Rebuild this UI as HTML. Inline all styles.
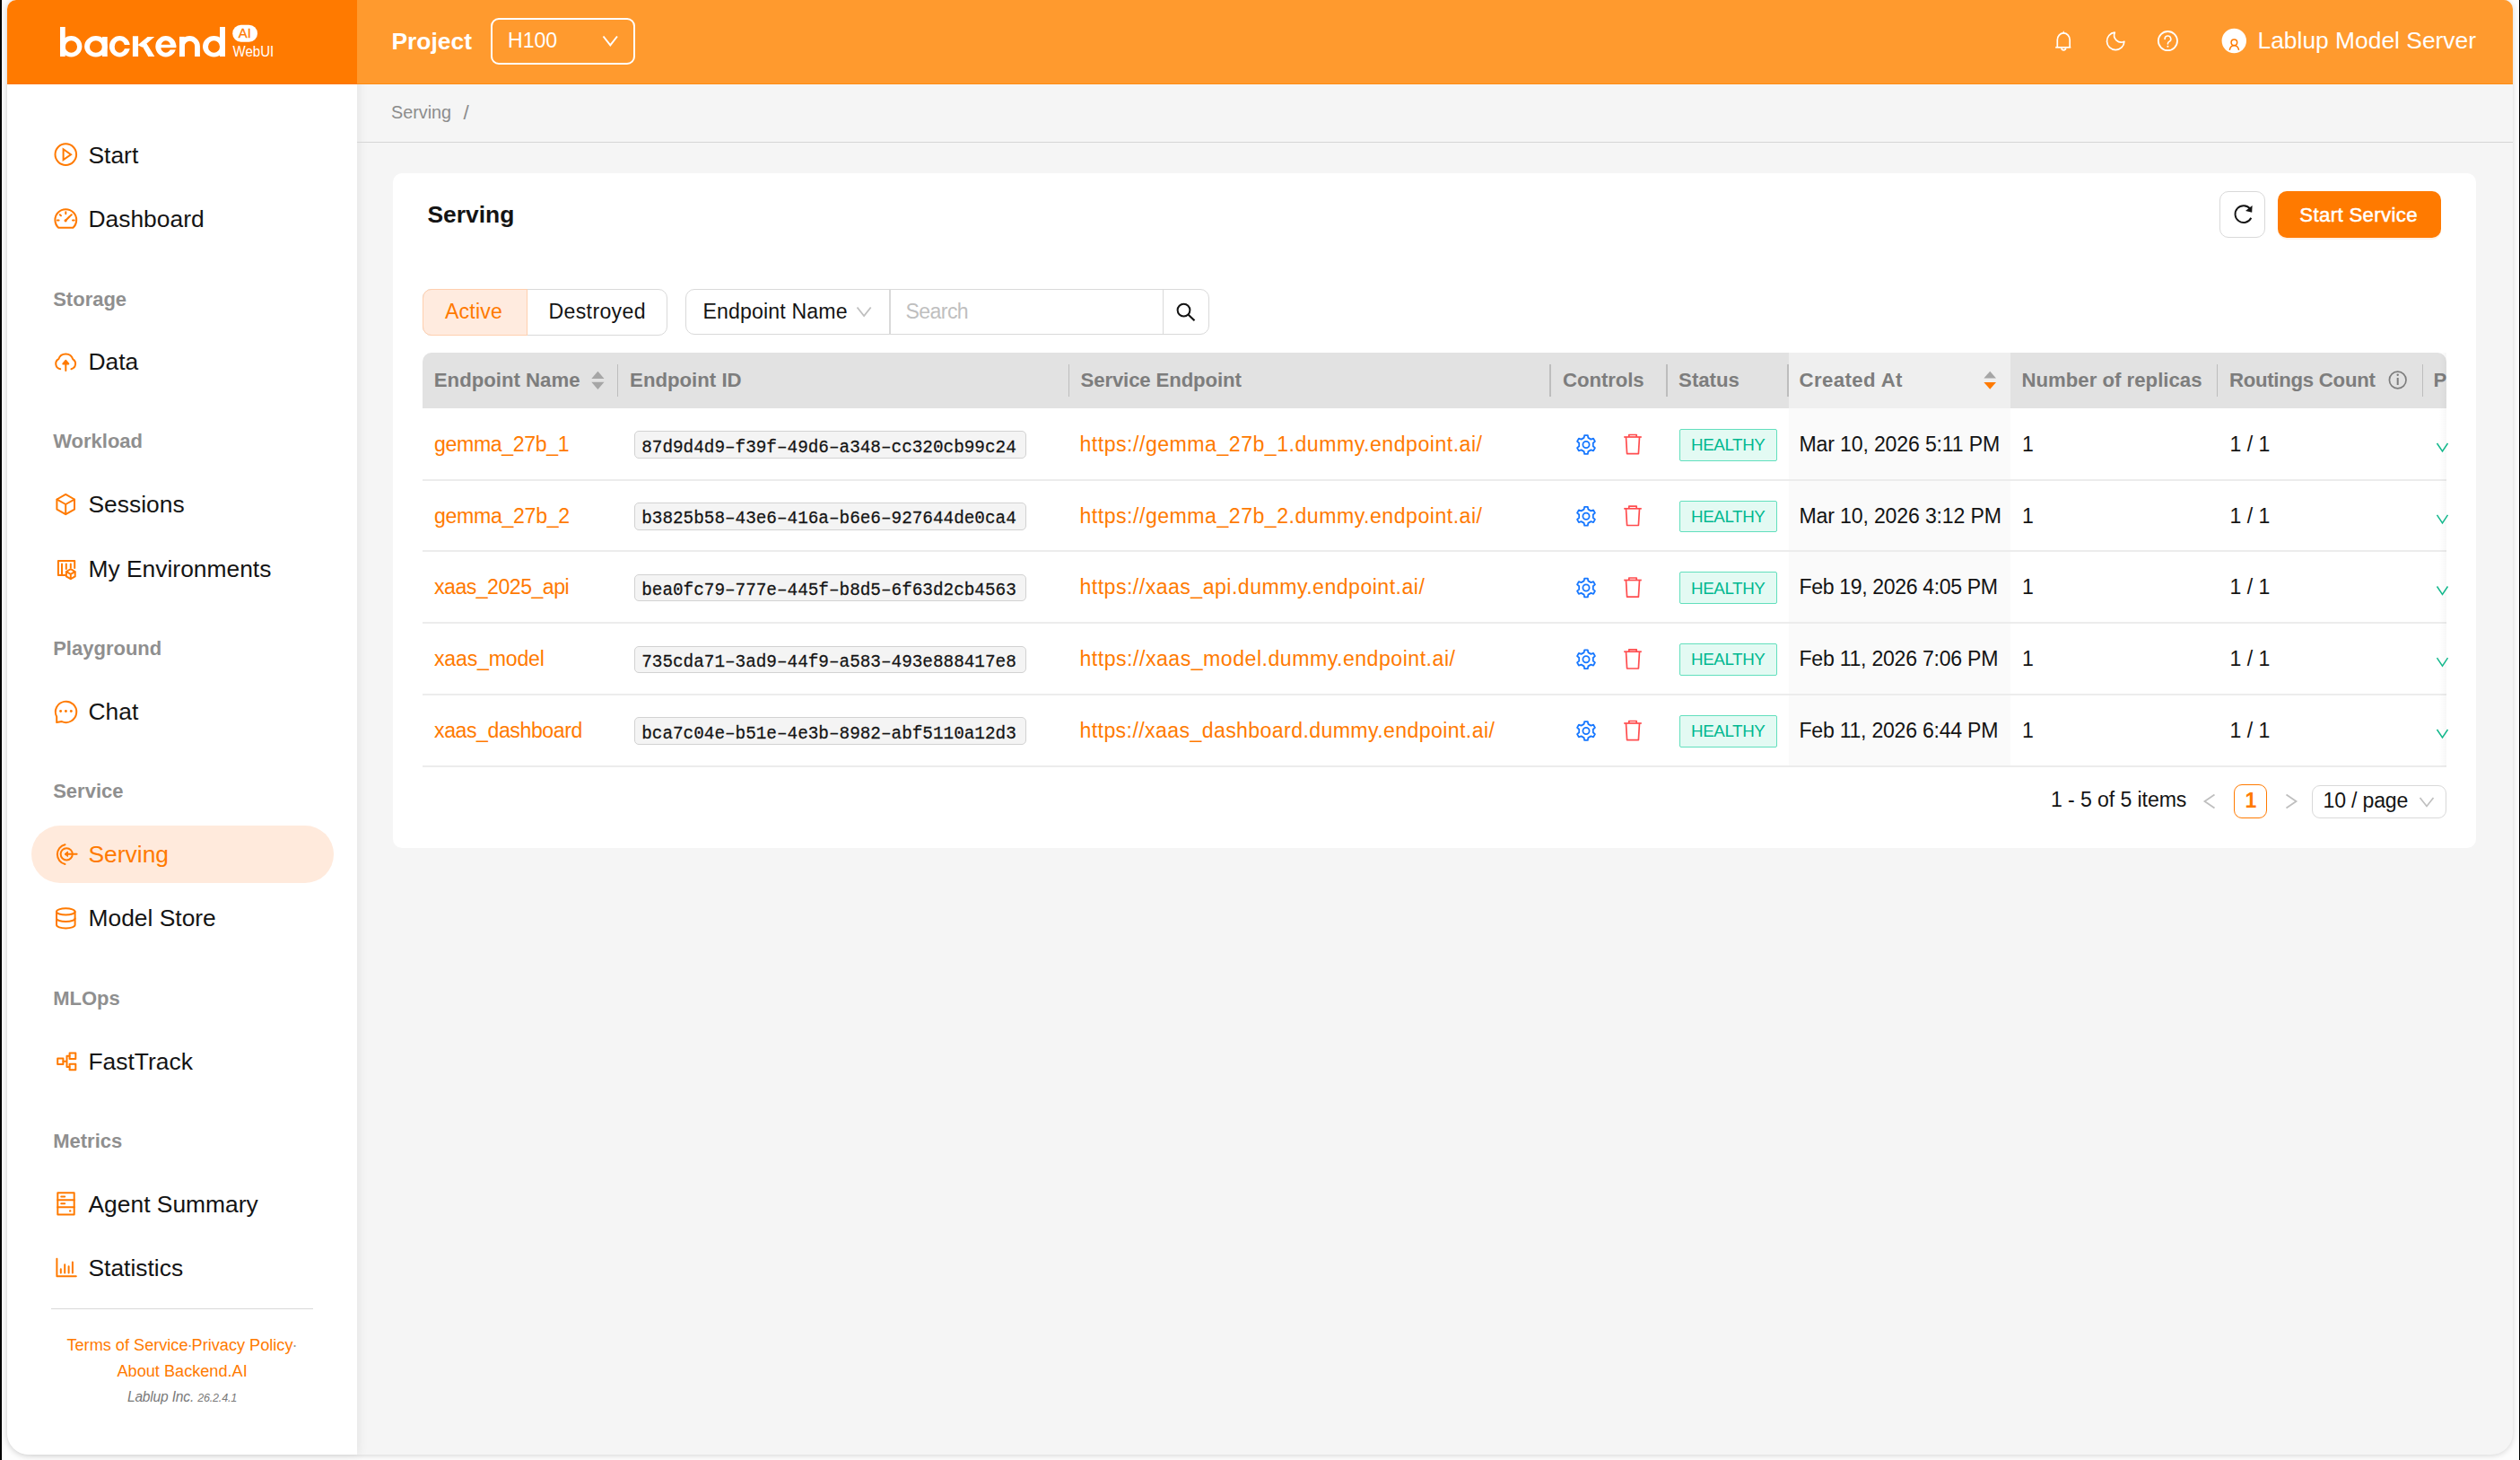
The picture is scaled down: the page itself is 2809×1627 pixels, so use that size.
<!DOCTYPE html>
<html><head><meta charset="utf-8"><title>Serving</title>
<style>
html,body{margin:0;padding:0;}
body{width:2809px;height:1627px;overflow:hidden;position:relative;background:#fdfdfd;font-family:"Liberation Sans",sans-serif;}
.t{position:absolute;white-space:pre;font-family:"Liberation Sans",sans-serif;}
.b{position:absolute;}
.ov{position:absolute;left:0;top:0;}
</style></head><body>
<div class="b" style="left:0px;top:0px;width:2px;height:1627px;background:#000"></div><div class="b" style="left:2808px;top:0px;width:1px;height:1627px;background:#000"></div><div class="b" style="left:8px;top:0px;width:2793px;height:1621px;background:#f5f5f5;border-radius:10px 10px 24px 24px;box-shadow:0 1px 6px rgba(0,0,0,0.16);overflow:hidden"></div><div class="b" style="left:8px;top:0px;width:390px;height:1621px;background:#fff;border-radius:10px 0 0 24px;box-shadow:2px 0 12px rgba(0,0,0,0.07)"></div><div class="b" style="left:8px;top:0px;width:390px;height:94px;background:#FF7A00;border-top-left-radius:10px"></div><div class="b" style="left:398px;top:0px;width:2403px;height:94px;background:#FF9A2E;border-top-right-radius:10px"></div><div class="b" style="left:398px;top:93px;width:2403px;height:1px;background:#FF8C15"></div><div class="b" style="left:8px;top:93px;width:390px;height:1px;background:#FB7500"></div><div class="t " style="left:436.5px;top:33.15px;font-size:26.4px;line-height:26.4px;color:#fff;font-weight:700;">Project</div><div class="b" style="left:547px;top:20px;width:161px;height:52px;border:2px solid #fff;border-radius:9px;box-sizing:border-box"></div><div class="t " style="left:566.0px;top:34.45px;font-size:23.1px;line-height:23.1px;color:#fff;font-weight:400;">H100</div><div class="t " style="left:2516.5px;top:31.65px;font-size:26.4px;line-height:26.4px;color:#fff;font-weight:400;">Lablup Model Server</div><div class="b" style="left:35px;top:919.5px;width:337px;height:64.0px;background:#FFEADC;border-radius:32px"></div><div class="t " style="left:98.5px;top:160.15px;font-size:26.4px;line-height:26.4px;color:#141414;font-weight:400;">Start</div><div class="t " style="left:98.5px;top:231.15px;font-size:26.4px;line-height:26.4px;color:#141414;font-weight:400;">Dashboard</div><div class="t " style="left:59.2px;top:322.68px;font-size:22px;line-height:22px;color:#8f8f8f;font-weight:700;letter-spacing:0px">Storage</div><div class="t " style="left:98.5px;top:389.65px;font-size:26.4px;line-height:26.4px;color:#141414;font-weight:400;">Data</div><div class="t " style="left:59.2px;top:481.38px;font-size:22px;line-height:22px;color:#8f8f8f;font-weight:700;letter-spacing:0px">Workload</div><div class="t " style="left:98.5px;top:548.65px;font-size:26.4px;line-height:26.4px;color:#141414;font-weight:400;">Sessions</div><div class="t " style="left:98.5px;top:620.65px;font-size:26.4px;line-height:26.4px;color:#141414;font-weight:400;">My Environments</div><div class="t " style="left:59.2px;top:712.38px;font-size:22px;line-height:22px;color:#8f8f8f;font-weight:700;letter-spacing:0px">Playground</div><div class="t " style="left:98.5px;top:780.05px;font-size:26.4px;line-height:26.4px;color:#141414;font-weight:400;">Chat</div><div class="t " style="left:59.2px;top:871.18px;font-size:22px;line-height:22px;color:#8f8f8f;font-weight:700;letter-spacing:0px">Service</div><div class="t " style="left:98.5px;top:939.15px;font-size:26.4px;line-height:26.4px;color:#FF7A00;font-weight:400;">Serving</div><div class="t " style="left:98.5px;top:1009.95px;font-size:26.4px;line-height:26.4px;color:#141414;font-weight:400;">Model Store</div><div class="t " style="left:59.2px;top:1101.98px;font-size:22px;line-height:22px;color:#8f8f8f;font-weight:700;letter-spacing:0px">MLOps</div><div class="t " style="left:98.5px;top:1169.65px;font-size:26.4px;line-height:26.4px;color:#141414;font-weight:400;">FastTrack</div><div class="t " style="left:59.2px;top:1261.38px;font-size:22px;line-height:22px;color:#8f8f8f;font-weight:700;letter-spacing:0px">Metrics</div><div class="t " style="left:98.5px;top:1328.55px;font-size:26.4px;line-height:26.4px;color:#141414;font-weight:400;">Agent Summary</div><div class="t " style="left:98.5px;top:1399.65px;font-size:26.4px;line-height:26.4px;color:#141414;font-weight:400;">Statistics</div><div class="b" style="left:57px;top:1457.5px;width:292px;height:1.0px;background:#d9d9d9"></div><div class="t" style="left:8px;width:390px;text-align:center;top:1489.94px;font-size:18.15px;line-height:18.15px;color:#FF7A00">Terms of Service<span style="color:#999;margin:0 -1px">·</span>Privacy Policy<span style="color:#999;margin:0 0 0 -1px">·</span></div><div class="t " style="left:130.5px;top:1518.54px;font-size:18.15px;line-height:18.15px;color:#FF7A00;font-weight:400;">About Backend.AI</div><div class="t" style="left:8px;width:390px;text-align:center;top:1548.93px;font-size:15.6px;line-height:16.5px;color:#7a7a7a;font-style:italic;letter-spacing:-0.2px">Lablup Inc. <span style="font-size:12.6px">26.2.4.1</span></div><div class="t " style="left:436.0px;top:115.74px;font-size:19.8px;line-height:19.8px;color:#8c8c8c;font-weight:400;">Serving</div><div class="t " style="left:516.5px;top:115.15px;font-size:22.5px;line-height:22.5px;color:#8c8c8c;font-weight:400;">/</div><div class="b" style="left:398px;top:158px;width:2403px;height:1px;background:#d6d6d6"></div><div class="b" style="left:438px;top:193px;width:2322px;height:752px;background:#fff;border-radius:10px"></div><div class="t " style="left:476.5px;top:225.95px;font-size:26.4px;line-height:26.4px;color:#141414;font-weight:700;">Serving</div><div class="b" style="left:2474px;top:213px;width:51px;height:51.5px;border:1.65px solid #d9d9d9;border-radius:10px;box-sizing:border-box;background:#fff"></div><div class="b" style="left:2538.5px;top:213px;width:182.5px;height:51.80000000000001px;background:#FF7A00;border-radius:10px;box-shadow:0 2px 0 rgba(255,122,0,0.1)"></div><div class="t " style="left:2563.3px;top:228.51px;font-size:22.2px;line-height:22.2px;color:#fff;font-weight:400;-webkit-text-stroke:0.5px #fff;letter-spacing:0.35px">Start Service</div><div class="b" style="left:471px;top:322px;width:273px;height:51.5px;border:1.65px solid #d9d9d9;border-radius:10px;box-sizing:border-box;background:#fff"></div><div class="b" style="left:471px;top:322px;width:117px;height:51.5px;border:1.65px solid #FFCFAE;border-radius:10px 0 0 10px;box-sizing:border-box;background:#FFEBDF"></div><div class="t " style="left:496.0px;top:336.25px;font-size:23.1px;line-height:23.1px;color:#FF7A00;font-weight:400;letter-spacing:0.2px">Active</div><div class="t " style="left:611.5px;top:336.25px;font-size:23.1px;line-height:23.1px;color:#141414;font-weight:400;letter-spacing:0.35px">Destroyed</div><div class="b" style="left:764px;top:322px;width:583.5px;height:51px;border:1.65px solid #d9d9d9;border-radius:10px;box-sizing:border-box;background:#fff"></div><div class="b" style="left:991px;top:322px;width:1.6000000000000227px;height:51px;background:#d9d9d9"></div><div class="b" style="left:1295.5px;top:322px;width:1.599999999999909px;height:51px;background:#d9d9d9"></div><div class="t " style="left:783.5px;top:336.25px;font-size:23.1px;line-height:23.1px;color:#141414;font-weight:400;letter-spacing:0.16px">Endpoint Name</div><div class="t " style="left:1009.5px;top:336.25px;font-size:23.1px;line-height:23.1px;color:#bfbfbf;font-weight:400;letter-spacing:-0.6px">Search</div><div class="b" style="left:471px;top:393px;width:2256px;height:62px;background:#e2e2e2;border-radius:10px 10px 0 0"></div><div class="b" style="left:1993.5px;top:393px;width:247.5px;height:62px;background:#efefef"></div><div class="b" style="left:1993.5px;top:455px;width:247.5px;height:399px;background:#fafafa"></div><div class="t " style="left:483.8px;top:413.21px;font-size:22.2px;line-height:22.2px;color:#7d7d7d;font-weight:700;letter-spacing:0px">Endpoint Name</div><div class="t " style="left:702.1px;top:413.21px;font-size:22.2px;line-height:22.2px;color:#7d7d7d;font-weight:700;letter-spacing:0px">Endpoint ID</div><div class="t " style="left:1204.5px;top:413.21px;font-size:22.2px;line-height:22.2px;color:#7d7d7d;font-weight:700;letter-spacing:-0.13px">Service Endpoint</div><div class="t " style="left:1742.1px;top:413.21px;font-size:22.2px;line-height:22.2px;color:#7d7d7d;font-weight:700;letter-spacing:-0.09px">Controls</div><div class="t " style="left:1871.1px;top:413.21px;font-size:22.2px;line-height:22.2px;color:#7d7d7d;font-weight:700;letter-spacing:0px">Status</div><div class="t " style="left:2005.5px;top:413.21px;font-size:22.2px;line-height:22.2px;color:#7d7d7d;font-weight:700;letter-spacing:0.4px">Created At</div><div class="t " style="left:2253.5px;top:413.21px;font-size:22.2px;line-height:22.2px;color:#7d7d7d;font-weight:700;letter-spacing:0px">Number of replicas</div><div class="t " style="left:2484.9px;top:413.21px;font-size:22.2px;line-height:22.2px;color:#7d7d7d;font-weight:700;letter-spacing:-0.26px">Routings Count</div><div class="b" style="left:2700px;top:393px;width:27px;height:62px;overflow:hidden;border-top-right-radius:10px"><div class="t" style="left:12.5px;top:20.21px;font-size:22.2px;line-height:22.2px;color:#7d7d7d;font-weight:700">P</div></div><div class="b" style="left:687.8000000000001px;top:406px;width:1.599999999999909px;height:36px;background:#bdbdbd"></div><div class="b" style="left:1190.9px;top:406px;width:1.599999999999909px;height:36px;background:#bdbdbd"></div><div class="b" style="left:1727.2px;top:406px;width:1.599999999999909px;height:36px;background:#bdbdbd"></div><div class="b" style="left:1857.2px;top:406px;width:1.599999999999909px;height:36px;background:#bdbdbd"></div><div class="b" style="left:1992.2px;top:406px;width:1.599999999999909px;height:36px;background:#bdbdbd"></div><div class="b" style="left:2470.7999999999997px;top:406px;width:1.6000000000003638px;height:36px;background:#bdbdbd"></div><div class="b" style="left:2699.8999999999996px;top:406px;width:1.6000000000003638px;height:36px;background:#bdbdbd"></div><div class="b" style="left:471px;top:534px;width:2256px;height:1.5px;background:#ececec"></div><div class="t " style="left:484.0px;top:483.95px;font-size:23.1px;line-height:23.1px;color:#FF7A00;font-weight:400;letter-spacing:-0.34px">gemma_27b_1</div><div class="b" style="left:706.5px;top:480.3px;width:437.0px;height:30.5px;background:#f4f4f4;border:1.65px solid #d2d2d2;border-radius:5px;box-sizing:border-box"></div><div class="t " style="left:715.2px;top:489.74px;font-size:19.33px;line-height:19.33px;color:#141414;font-weight:400;font-family:'Liberation Mono',monospace;transform:scaleY(1.08);transform-origin:0 14.2px;-webkit-text-stroke:0.25px #141414">87d9d4d9–f39f–49d6–a348–cc320cb99c24</div><div class="t " style="left:1203.5px;top:483.95px;font-size:23.1px;line-height:23.1px;color:#FF7A00;font-weight:400;letter-spacing:0.51px">https://gemma_27b_1.dummy.endpoint.ai/</div><div class="b" style="left:1872px;top:477.9px;width:108.5px;height:35.89999999999998px;background:#E3FAF3;border:1.9px solid #62DFBD;border-radius:2px;box-sizing:border-box"></div><div class="t " style="left:1885.0px;top:487.09px;font-size:18.8px;line-height:18.8px;color:#00B890;font-weight:400;letter-spacing:-0.4px">HEALTHY</div><div class="t " style="left:2005.5px;top:483.95px;font-size:23.1px;line-height:23.1px;color:#141414;font-weight:400;letter-spacing:-0.16px">Mar 10, 2026 5:11 PM</div><div class="t " style="left:2254.0px;top:483.95px;font-size:23.1px;line-height:23.1px;color:#141414;font-weight:400;">1</div><div class="t " style="left:2485.5px;top:483.95px;font-size:23.1px;line-height:23.1px;color:#141414;font-weight:400;">1 / 1</div><div class="b" style="left:471px;top:613px;width:2256px;height:1.5px;background:#ececec"></div><div class="t " style="left:484.0px;top:563.70px;font-size:23.1px;line-height:23.1px;color:#FF7A00;font-weight:400;letter-spacing:-0.3px">gemma_27b_2</div><div class="b" style="left:706.5px;top:560.0px;width:437.0px;height:30.5px;background:#f4f4f4;border:1.65px solid #d2d2d2;border-radius:5px;box-sizing:border-box"></div><div class="t " style="left:715.2px;top:569.49px;font-size:19.33px;line-height:19.33px;color:#141414;font-weight:400;font-family:'Liberation Mono',monospace;transform:scaleY(1.08);transform-origin:0 14.2px;-webkit-text-stroke:0.25px #141414">b3825b58–43e6–416a–b6e6–927644de0ca4</div><div class="t " style="left:1203.5px;top:563.70px;font-size:23.1px;line-height:23.1px;color:#FF7A00;font-weight:400;letter-spacing:0.51px">https://gemma_27b_2.dummy.endpoint.ai/</div><div class="b" style="left:1872px;top:557.6px;width:108.5px;height:35.89999999999998px;background:#E3FAF3;border:1.9px solid #62DFBD;border-radius:2px;box-sizing:border-box"></div><div class="t " style="left:1885.0px;top:566.84px;font-size:18.8px;line-height:18.8px;color:#00B890;font-weight:400;letter-spacing:-0.4px">HEALTHY</div><div class="t " style="left:2005.5px;top:563.70px;font-size:23.1px;line-height:23.1px;color:#141414;font-weight:400;letter-spacing:-0.16px">Mar 10, 2026 3:12 PM</div><div class="t " style="left:2254.0px;top:563.70px;font-size:23.1px;line-height:23.1px;color:#141414;font-weight:400;">1</div><div class="t " style="left:2485.5px;top:563.70px;font-size:23.1px;line-height:23.1px;color:#141414;font-weight:400;">1 / 1</div><div class="b" style="left:471px;top:693px;width:2256px;height:1.5px;background:#ececec"></div><div class="t " style="left:484.0px;top:643.45px;font-size:23.1px;line-height:23.1px;color:#FF7A00;font-weight:400;letter-spacing:-0.5px">xaas_2025_api</div><div class="b" style="left:706.5px;top:639.8px;width:437.0px;height:30.5px;background:#f4f4f4;border:1.65px solid #d2d2d2;border-radius:5px;box-sizing:border-box"></div><div class="t " style="left:715.2px;top:649.24px;font-size:19.33px;line-height:19.33px;color:#141414;font-weight:400;font-family:'Liberation Mono',monospace;transform:scaleY(1.08);transform-origin:0 14.2px;-webkit-text-stroke:0.25px #141414">bea0fc79–777e–445f–b8d5–6f63d2cb4563</div><div class="t " style="left:1203.5px;top:643.45px;font-size:23.1px;line-height:23.1px;color:#FF7A00;font-weight:400;letter-spacing:0.48px">https://xaas_api.dummy.endpoint.ai/</div><div class="b" style="left:1872px;top:637.4px;width:108.5px;height:35.89999999999998px;background:#E3FAF3;border:1.9px solid #62DFBD;border-radius:2px;box-sizing:border-box"></div><div class="t " style="left:1885.0px;top:646.59px;font-size:18.8px;line-height:18.8px;color:#00B890;font-weight:400;letter-spacing:-0.4px">HEALTHY</div><div class="t " style="left:2005.5px;top:643.45px;font-size:23.1px;line-height:23.1px;color:#141414;font-weight:400;letter-spacing:-0.37px">Feb 19, 2026 4:05 PM</div><div class="t " style="left:2254.0px;top:643.45px;font-size:23.1px;line-height:23.1px;color:#141414;font-weight:400;">1</div><div class="t " style="left:2485.5px;top:643.45px;font-size:23.1px;line-height:23.1px;color:#141414;font-weight:400;">1 / 1</div><div class="b" style="left:471px;top:773px;width:2256px;height:1.5px;background:#ececec"></div><div class="t " style="left:484.0px;top:723.20px;font-size:23.1px;line-height:23.1px;color:#FF7A00;font-weight:400;letter-spacing:-0.18px">xaas_model</div><div class="b" style="left:706.5px;top:719.5px;width:437.0px;height:30.5px;background:#f4f4f4;border:1.65px solid #d2d2d2;border-radius:5px;box-sizing:border-box"></div><div class="t " style="left:715.2px;top:728.99px;font-size:19.33px;line-height:19.33px;color:#141414;font-weight:400;font-family:'Liberation Mono',monospace;transform:scaleY(1.08);transform-origin:0 14.2px;-webkit-text-stroke:0.25px #141414">735cda71–3ad9–44f9–a583–493e888417e8</div><div class="t " style="left:1203.5px;top:723.20px;font-size:23.1px;line-height:23.1px;color:#FF7A00;font-weight:400;letter-spacing:0.51px">https://xaas_model.dummy.endpoint.ai/</div><div class="b" style="left:1872px;top:717.1px;width:108.5px;height:35.89999999999998px;background:#E3FAF3;border:1.9px solid #62DFBD;border-radius:2px;box-sizing:border-box"></div><div class="t " style="left:1885.0px;top:726.34px;font-size:18.8px;line-height:18.8px;color:#00B890;font-weight:400;letter-spacing:-0.4px">HEALTHY</div><div class="t " style="left:2005.5px;top:723.20px;font-size:23.1px;line-height:23.1px;color:#141414;font-weight:400;letter-spacing:-0.26px">Feb 11, 2026 7:06 PM</div><div class="t " style="left:2254.0px;top:723.20px;font-size:23.1px;line-height:23.1px;color:#141414;font-weight:400;">1</div><div class="t " style="left:2485.5px;top:723.20px;font-size:23.1px;line-height:23.1px;color:#141414;font-weight:400;">1 / 1</div><div class="b" style="left:471px;top:853px;width:2256px;height:1.5px;background:#ececec"></div><div class="t " style="left:484.0px;top:802.95px;font-size:23.1px;line-height:23.1px;color:#FF7A00;font-weight:400;letter-spacing:-0.42px">xaas_dashboard</div><div class="b" style="left:706.5px;top:799.3px;width:437.0px;height:30.5px;background:#f4f4f4;border:1.65px solid #d2d2d2;border-radius:5px;box-sizing:border-box"></div><div class="t " style="left:715.2px;top:808.74px;font-size:19.33px;line-height:19.33px;color:#141414;font-weight:400;font-family:'Liberation Mono',monospace;transform:scaleY(1.08);transform-origin:0 14.2px;-webkit-text-stroke:0.25px #141414">bca7c04e–b51e–4e3b–8982–abf5110a12d3</div><div class="t " style="left:1203.5px;top:802.95px;font-size:23.1px;line-height:23.1px;color:#FF7A00;font-weight:400;letter-spacing:0.4px">https://xaas_dashboard.dummy.endpoint.ai/</div><div class="b" style="left:1872px;top:796.9px;width:108.5px;height:35.89999999999998px;background:#E3FAF3;border:1.9px solid #62DFBD;border-radius:2px;box-sizing:border-box"></div><div class="t " style="left:1885.0px;top:806.09px;font-size:18.8px;line-height:18.8px;color:#00B890;font-weight:400;letter-spacing:-0.4px">HEALTHY</div><div class="t " style="left:2005.5px;top:802.95px;font-size:23.1px;line-height:23.1px;color:#141414;font-weight:400;letter-spacing:-0.26px">Feb 11, 2026 6:44 PM</div><div class="t " style="left:2254.0px;top:802.95px;font-size:23.1px;line-height:23.1px;color:#141414;font-weight:400;">1</div><div class="t " style="left:2485.5px;top:802.95px;font-size:23.1px;line-height:23.1px;color:#141414;font-weight:400;">1 / 1</div><div class="b" style="left:2719px;top:393px;width:8px;height:461px;background:linear-gradient(to right, rgba(0,0,0,0), rgba(0,0,0,0.03))"></div><div class="t " style="left:2286.0px;top:880.45px;font-size:23.1px;line-height:23.1px;color:#141414;font-weight:400;letter-spacing:-0.09px">1 - 5 of 5 items</div><div class="b" style="left:2489.5px;top:874.3px;width:37.5px;height:38.0px;border:1.65px solid #FF7A00;border-radius:9px;box-sizing:border-box"></div><div class="t " style="left:2502.5px;top:881.45px;font-size:23.1px;line-height:23.1px;color:#FF7A00;font-weight:700;">1</div><div class="b" style="left:2577px;top:874.5px;width:150px;height:37.799999999999955px;border:1.65px solid #d9d9d9;border-radius:9px;box-sizing:border-box"></div><div class="t " style="left:2589.5px;top:881.45px;font-size:23.1px;line-height:23.1px;color:#141414;font-weight:400;letter-spacing:-0.18px">10 / page</div>
<svg class="ov" width="2809" height="1627" viewBox="0 0 2809 1627"><path d="M67.40 51.80 a12 11.7 0 1 0 24.00 0 a12 11.7 0 1 0 -24.00 0 Z M94.10 51.80 a12.75 11.7 0 1 0 25.50 0 a12.75 11.7 0 1 0 -25.50 0 Z M121.90 51.80 a11.5 11.7 0 1 0 23.00 0 a11.5 11.7 0 1 0 -23.00 0 Z M173.30 51.80 a11.5 11.7 0 1 0 23.00 0 a11.5 11.7 0 1 0 -23.00 0 Z M226.00 51.80 a12.5 11.7 0 1 0 25.00 0 a12.5 11.7 0 1 0 -25.00 0 Z " fill="#fff"/><path d="M72.75 51.90 a6.65 6.75 0 1 0 13.30 0 a6.65 6.75 0 1 0 -13.30 0 Z M99.90 51.90 a6.95 6.75 0 1 0 13.90 0 a6.95 6.75 0 1 0 -13.90 0 Z M127.70 51.90 a5.7 6.75 0 1 0 11.40 0 a5.7 6.75 0 1 0 -11.40 0 Z M179.20 51.90 a5.6 6.75 0 1 0 11.20 0 a5.6 6.75 0 1 0 -11.20 0 Z M232.00 51.90 a6.5 6.75 0 1 0 13.00 0 a6.5 6.75 0 1 0 -13.00 0 Z " fill="#FF7A00"/><path d="M67 30 H72.7 V63.1 H67 Z M114 40.9 H119.7 V63.1 H114 Z M245 30 H251 V63.1 H245 Z M147.9 40.3 H154.1 V63.1 H147.9 Z" fill="#fff"/><rect x="137" y="50" width="9" height="4.2" fill="#FF7A00"/><rect x="179" y="49.8" width="17.3" height="3.4" fill="#fff"/><rect x="189.5" y="53.2" width="8" height="2.2" fill="#FF7A00"/><path d="M153.5 50.2 L164.6 40.9 H172.2 L158.6 52.7 Z M158.2 50.8 L162.6 47.2 L172.4 63.1 H165.3 Z" fill="#fff"/><path d="M202.9 63.1 V51.5 A8.55 8.55 0 0 1 220 51.5 V63.1" fill="none" stroke="#fff" stroke-width="5.8"/><path d="M200 40.9 H205.8 V63.1 H200 Z" fill="#fff"/><rect x="259.2" y="27.7" width="27.8" height="19" rx="9.5" fill="#fff"/><text x="265.8" y="41.9" font-family="Liberation Sans" font-weight="400" font-size="15.2" fill="#FF7A00" textLength="14" lengthAdjust="spacingAndGlyphs" stroke="#FF7A00" stroke-width="0.3">AI</text><text x="259.6" y="63.4" font-family="Liberation Sans" font-weight="400" font-size="16.8" fill="#fff" textLength="45.6" lengthAdjust="spacingAndGlyphs">WebUI</text><path d="M672.5 40.5 L680.3 50.3 L688 40.5" fill="none" stroke="#fff" stroke-width="2"/><g fill="none" stroke="#fff" stroke-width="1.7" stroke-linejoin="round"><path d="M2293.3 52.6 V44.5 a6.95 7.6 0 0 1 13.9 0 V52.6"/><path d="M2291.2 52.8 H2308.3"/><path d="M2298 53.5 a2.3 2.3 0 0 0 4.6 0"/></g><path d="M2300.2 34.3 L2298.8 37.3 H2301.6 Z" fill="#fff"/><path d="M2357.3 36.2 A9.7 9.7 0 1 0 2367.9 46.3 A7.8 7.8 0 0 1 2357.3 36.2 Z" fill="none" stroke="#fff" stroke-width="1.7" stroke-linejoin="round"/><circle cx="2416.4" cy="45.6" r="10.6" fill="none" stroke="#fff" stroke-width="1.8"/><path d="M2413.1 43.4 a3.35 3.35 0 1 1 4.8 3 c-1.1 0.6 -1.5 1.2 -1.5 2.6" fill="none" stroke="#fff" stroke-width="1.6" stroke-linecap="round"/><circle cx="2416.4" cy="51.8" r="1.05" fill="#fff"/><circle cx="2490.3" cy="45.5" r="13.7" fill="#fff"/><circle cx="2490.4" cy="47.3" r="3.3" fill="none" stroke="#FF7A00" stroke-width="1.5"/><path d="M2485.3 55.8 C2485.8 52.5 2487.8 50.8 2490.4 50.8 C2493 50.8 2495 52.5 2495.6 55.8" fill="none" stroke="#FF7A00" stroke-width="1.5"/><g fill="none" stroke="#FF7A00" stroke-width="2" stroke-linejoin="round" stroke-linecap="round"><circle cx="73.3" cy="172.1" r="11.8"/><path d="M70.6 166.3 L79 172.2 L70.6 178 Z" stroke-linejoin="miter"/></g><g fill="none" stroke="#FF7A00" stroke-width="2" stroke-linejoin="round" stroke-linecap="round"><path d="M65.2 253.8 A11.9 11.9 0 1 1 81.4 253.8 Z"/><path d="M73.3 236.3 V238.3 M66.8 239.2 L68 240.4 M79.8 239.2 L78.6 240.4 M63.8 245.6 H65.6 M81 245.6 H82.8"/><path d="M73.3 245.6 L77.6 241.2" stroke-width="2.2"/></g><circle cx="73.1" cy="245.8" r="1.6" fill="#FF7A00"/><g fill="none" stroke="#FF7A00" stroke-width="2" stroke-linejoin="round" stroke-linecap="round"><path d="M67.2 411.2 A5.9 5.9 0 0 1 65.3 400.2 A8.4 8.4 0 0 1 81.3 400.4 A5.9 5.9 0 0 1 79.4 411.2"/><path d="M73.3 413 V402.5"/><path d="M70.3 405.4 L73.3 401.8 L76.3 405.4 Z" fill="#FF7A00"/></g><g fill="none" stroke="#FF7A00" stroke-width="2" stroke-linejoin="round" stroke-linecap="round"><path d="M73.2 550.9 L83 556.5 V567.6 L73.2 573.2 L63.4 567.6 V556.5 Z"/><path d="M63.6 556.6 L73.2 562 L82.8 556.6 M73.2 562 V573"/></g><g fill="none" stroke="#FF7A00" stroke-width="2" stroke-linejoin="round" stroke-linecap="round" stroke-linecap="butt"><path d="M72.5 640.9 H64.9 V625 H83.2 V633"/><path d="M69 628.5 V640 M73.8 628.5 V634 M78.8 628.5 V632.5"/><path d="M78.8 634.2 L83.7 637 V642.4 L78.8 645.2 L73.9 642.4 V637 Z"/><path d="M74.2 637.2 L78.8 639.8 L83.4 637.2 M78.8 639.8 V645"/></g><g fill="none" stroke="#FF7A00" stroke-width="2" stroke-linejoin="round" stroke-linecap="round"><path d="M63.2 805 V798.8 A11.7 11.7 0 1 1 68.9 804.1 Z"/></g><circle cx="67.6" cy="792.5" r="1.45" fill="#FF7A00"/><circle cx="73.4" cy="792.5" r="1.45" fill="#FF7A00"/><circle cx="79.3" cy="792.5" r="1.45" fill="#FF7A00"/><g fill="none" stroke="#FF7A00" stroke-width="2" stroke-linejoin="round" stroke-linecap="round"><path d="M72.5 941.2 A11.2 11.2 0 0 0 72.5 963"/><circle cx="74.2" cy="951.8" r="6.6"/><path d="M85.6 951.8 H73.5"/></g><path d="M72 951.8 L75.5 949 V954.6 Z" fill="#FF7A00" stroke="#FF7A00" stroke-width="1"/><g fill="none" stroke="#FF7A00" stroke-width="2" stroke-linejoin="round" stroke-linecap="round"><ellipse cx="73.3" cy="1015.9" rx="10.3" ry="3.6"/><path d="M63 1015.9 V1030.8 A10.3 3.6 0 0 0 83.6 1030.8 V1015.9"/><path d="M63 1023.4 A10.3 3.6 0 0 0 83.6 1023.4"/></g><g fill="none" stroke="#FF7A00" stroke-width="2" stroke-linejoin="round" stroke-linecap="round" stroke-linejoin="miter" stroke-linecap="butt"><rect x="64.2" y="1179.6" width="6.2" height="6.5"/><rect x="77.6" y="1173.4" width="6.7" height="6.6"/><rect x="77.6" y="1185.8" width="6.7" height="6.4"/><path d="M70.4 1182.8 H74.5 M77.6 1176.7 H74.5 V1189 H77.6"/></g><g fill="none" stroke="#FF7A00" stroke-width="2" stroke-linejoin="round" stroke-linecap="round" stroke-linejoin="miter"><rect x="64.3" y="1329.2" width="18.4" height="24.3"/><path d="M64.3 1337.2 H82.7 M64.3 1345.3 H82.7" /><path d="M68.2 1333.6 H72.2 M68.2 1341.3 H72.2"/></g><circle cx="78.2" cy="1349.4" r="1.2" fill="#FF7A00"/><g fill="none" stroke="#FF7A00" stroke-width="2" stroke-linejoin="round" stroke-linecap="round" stroke-linecap="butt"><path d="M63.4 1402.8 V1422.2 H84.8"/><path d="M67.8 1414.2 V1418.6 M72.2 1409.3 V1418.6 M76.6 1411.3 V1418.6 M80.9 1406.6 V1418.6" stroke-linecap="round"/></g><path d="M2508.3 232.8 A9.4 9.4 0 1 0 2509.3 242.8" fill="none" stroke="#141414" stroke-width="1.9"/><path d="M2510.6 229 L2510.2 236.7 L2503 235 Z" fill="#141414"/><path d="M955.5 342.5 L963.1 352 L970.7 342.5" fill="none" stroke="#bfbfbf" stroke-width="1.8"/><circle cx="1319.5" cy="345.6" r="6.9" fill="none" stroke="#141414" stroke-width="2"/><path d="M1324.4 350.5 L1331.5 357.3" stroke="#141414" stroke-width="2.2"/><path d="M659.3 422 L666.4 413.8 L673.5 422 Z M659.3 425.8 L666.4 434 L673.5 425.8 Z" fill="#a6a6a6"/><path d="M2211.4 421.5 L2218.2 413.8 L2225 421.5 Z" fill="#a6a6a6"/><path d="M2211.4 426 L2218.2 433.8 L2225 426 Z" fill="#FF7A00"/><circle cx="2672.7" cy="423.5" r="9.3" fill="none" stroke="#7d7d7d" stroke-width="1.7"/><path d="M2672.7 421 V429" stroke="#7d7d7d" stroke-width="2"/><circle cx="2672.7" cy="417.8" r="1.2" fill="#7d7d7d"/><path d="M2716.5 494.0 L2722.5 503.0 L2728.5 494.0" fill="none" stroke="#13B88C" stroke-width="1.5"/><path d="M2716.5 573.8 L2722.5 582.8 L2728.5 573.8" fill="none" stroke="#13B88C" stroke-width="1.5"/><path d="M2716.5 653.5 L2722.5 662.5 L2728.5 653.5" fill="none" stroke="#13B88C" stroke-width="1.5"/><path d="M2716.5 733.2 L2722.5 742.2 L2728.5 733.2" fill="none" stroke="#13B88C" stroke-width="1.5"/><path d="M2716.5 813.0 L2722.5 822.0 L2728.5 813.0" fill="none" stroke="#13B88C" stroke-width="1.5"/><path d="M1765.64 487.86 L1766.21 485.05 L1769.79 485.05 L1770.36 487.86 L1773.44 489.63 L1776.15 488.72 L1777.94 491.83 L1775.80 493.73 L1775.80 497.27 L1777.94 499.17 L1776.15 502.28 L1773.44 501.37 L1770.36 503.14 L1769.79 505.95 L1766.21 505.95 L1765.64 503.14 L1762.56 501.37 L1759.85 502.28 L1758.06 499.17 L1760.20 497.27 L1760.20 493.73 L1758.06 491.83 L1759.85 488.72 L1762.56 489.63 Z" fill="none" stroke="#1677ff" stroke-width="1.8" stroke-linejoin="round"/><circle cx="1768" cy="495.50" r="3.6" fill="none" stroke="#1677ff" stroke-width="1.8"/><g fill="none" stroke="#ff4d4f" stroke-width="1.7" stroke-linejoin="round"><path d="M1810.2 487.0 H1829.8"/><path d="M1815.8 487.0 V484.5 H1824.2 V487.0"/><path d="M1812.5 487.0 L1813.6 505.7 H1826.4 L1827.5 487.0"/></g><path d="M1765.64 567.61 L1766.21 564.80 L1769.79 564.80 L1770.36 567.61 L1773.44 569.38 L1776.15 568.47 L1777.94 571.58 L1775.80 573.48 L1775.80 577.02 L1777.94 578.92 L1776.15 582.03 L1773.44 581.12 L1770.36 582.89 L1769.79 585.70 L1766.21 585.70 L1765.64 582.89 L1762.56 581.12 L1759.85 582.03 L1758.06 578.92 L1760.20 577.02 L1760.20 573.48 L1758.06 571.58 L1759.85 568.47 L1762.56 569.38 Z" fill="none" stroke="#1677ff" stroke-width="1.8" stroke-linejoin="round"/><circle cx="1768" cy="575.25" r="3.6" fill="none" stroke="#1677ff" stroke-width="1.8"/><g fill="none" stroke="#ff4d4f" stroke-width="1.7" stroke-linejoin="round"><path d="M1810.2 566.8 H1829.8"/><path d="M1815.8 566.8 V564.2 H1824.2 V566.8"/><path d="M1812.5 566.8 L1813.6 585.5 H1826.4 L1827.5 566.8"/></g><path d="M1765.64 647.36 L1766.21 644.55 L1769.79 644.55 L1770.36 647.36 L1773.44 649.13 L1776.15 648.22 L1777.94 651.33 L1775.80 653.23 L1775.80 656.77 L1777.94 658.67 L1776.15 661.78 L1773.44 660.87 L1770.36 662.64 L1769.79 665.45 L1766.21 665.45 L1765.64 662.64 L1762.56 660.87 L1759.85 661.78 L1758.06 658.67 L1760.20 656.77 L1760.20 653.23 L1758.06 651.33 L1759.85 648.22 L1762.56 649.13 Z" fill="none" stroke="#1677ff" stroke-width="1.8" stroke-linejoin="round"/><circle cx="1768" cy="655.00" r="3.6" fill="none" stroke="#1677ff" stroke-width="1.8"/><g fill="none" stroke="#ff4d4f" stroke-width="1.7" stroke-linejoin="round"><path d="M1810.2 646.5 H1829.8"/><path d="M1815.8 646.5 V644.0 H1824.2 V646.5"/><path d="M1812.5 646.5 L1813.6 665.2 H1826.4 L1827.5 646.5"/></g><path d="M1765.64 727.11 L1766.21 724.30 L1769.79 724.30 L1770.36 727.11 L1773.44 728.88 L1776.15 727.97 L1777.94 731.08 L1775.80 732.98 L1775.80 736.52 L1777.94 738.42 L1776.15 741.53 L1773.44 740.62 L1770.36 742.39 L1769.79 745.20 L1766.21 745.20 L1765.64 742.39 L1762.56 740.62 L1759.85 741.53 L1758.06 738.42 L1760.20 736.52 L1760.20 732.98 L1758.06 731.08 L1759.85 727.97 L1762.56 728.88 Z" fill="none" stroke="#1677ff" stroke-width="1.8" stroke-linejoin="round"/><circle cx="1768" cy="734.75" r="3.6" fill="none" stroke="#1677ff" stroke-width="1.8"/><g fill="none" stroke="#ff4d4f" stroke-width="1.7" stroke-linejoin="round"><path d="M1810.2 726.2 H1829.8"/><path d="M1815.8 726.2 V723.8 H1824.2 V726.2"/><path d="M1812.5 726.2 L1813.6 745.0 H1826.4 L1827.5 726.2"/></g><path d="M1765.64 806.86 L1766.21 804.05 L1769.79 804.05 L1770.36 806.86 L1773.44 808.63 L1776.15 807.72 L1777.94 810.83 L1775.80 812.73 L1775.80 816.27 L1777.94 818.17 L1776.15 821.28 L1773.44 820.37 L1770.36 822.14 L1769.79 824.95 L1766.21 824.95 L1765.64 822.14 L1762.56 820.37 L1759.85 821.28 L1758.06 818.17 L1760.20 816.27 L1760.20 812.73 L1758.06 810.83 L1759.85 807.72 L1762.56 808.63 Z" fill="none" stroke="#1677ff" stroke-width="1.8" stroke-linejoin="round"/><circle cx="1768" cy="814.50" r="3.6" fill="none" stroke="#1677ff" stroke-width="1.8"/><g fill="none" stroke="#ff4d4f" stroke-width="1.7" stroke-linejoin="round"><path d="M1810.2 806.0 H1829.8"/><path d="M1815.8 806.0 V803.5 H1824.2 V806.0"/><path d="M1812.5 806.0 L1813.6 824.7 H1826.4 L1827.5 806.0"/></g><path d="M2468.5 885.5 L2457.5 893 L2468.5 900.5" fill="none" stroke="#bfbfbf" stroke-width="1.8"/><path d="M2548.5 885.5 L2559.5 893 L2548.5 900.5" fill="none" stroke="#bfbfbf" stroke-width="1.8"/><path d="M2697.5 889 L2705 898.5 L2712.5 889" fill="none" stroke="#bfbfbf" stroke-width="1.7"/></svg>
</body></html>
